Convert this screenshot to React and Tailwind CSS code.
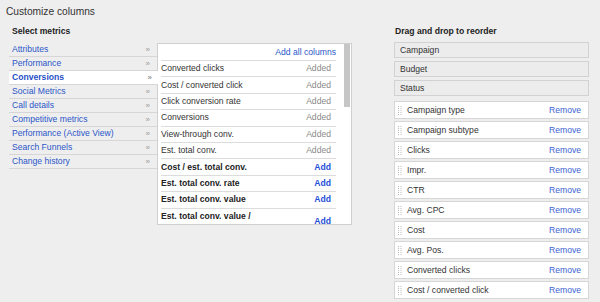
import React from "react";

const categories = [
  "Attributes",
  "Performance",
  "Conversions",
  "Social Metrics",
  "Call details",
  "Competitive metrics",
  "Performance (Active View)",
  "Search Funnels",
  "Change history",
];

const metrics = [
  { name: "Converted clicks", added: true },
  { name: "Cost / converted click", added: true },
  { name: "Click conversion rate", added: true },
  { name: "Conversions", added: true },
  { name: "View-through conv.", added: true },
  { name: "Est. total conv.", added: true },
  { name: "Cost / est. total conv.", added: false },
  { name: "Est. total conv. rate", added: false },
  { name: "Est. total conv. value", added: false },
];

const fixedCols = ["Campaign", "Budget", "Status"];
const movableCols = [
  "Campaign type",
  "Campaign subtype",
  "Clicks",
  "Impr.",
  "CTR",
  "Avg. CPC",
  "Cost",
  "Avg. Pos.",
  "Converted clicks",
  "Cost / converted click",
];

function Handle() {
  const dots = [];
  for (let r = 0; r < 5; r++) {
    for (let c = 0; c < 2; c++) {
      dots.push(<rect key={`${r}-${c}`} x={c * 2.5} y={r * 2} width="1" height="1" fill="#b8b8b8" />);
    }
  }
  return (
    <svg width="4" height="9" viewBox="0 0 4 9" className="shrink-0">
      {dots}
    </svg>
  );
}

export default function App() {
  return (
    <div className="w-[600px] h-[302px] bg-[#eeeeee] overflow-hidden font-['Liberation_Sans',Arial,sans-serif] text-[#333]">
      <div className="pl-[6px] pt-[4px] text-[10.2px] leading-[15px] text-[#333]">Customize columns</div>
      <div className="flex mt-[6px]">
        {/* Left: select metrics */}
        <div className="ml-[9px]">
          <div className="pl-[3px] h-[13px] text-[8.6px] leading-[13px] font-bold text-[#222]">Select metrics</div>
          <div className="flex mt-[5px]">
            <div className="w-[148px]">
              {categories.map((c) => {
                const sel = c === "Conversions";
                return (
                  <div
                    key={c}
                    className={
                      sel
                        ? "relative z-10 w-[149px] h-[14px] bg-white border-b border-[#d6d6d6] flex items-center pl-[3px] pr-[6px] text-[8.6px] font-bold text-[#1f4fc7]"
                        : "w-[148px] h-[14px] border-b border-[#d6d6d6] flex items-center pl-[3px] pr-[7px] text-[8.6px] text-[#2a56c9]"
                    }
                  >
                    <span className="flex-1 leading-[13px]">{c}</span>
                    <span className="text-[8px] leading-[13px] text-[#9a9a9a]">»</span>
                  </div>
                );
              })}
            </div>
            <div className="w-[195px] h-[182px] bg-white border border-[#cfcfcf] flex overflow-hidden">
              <div className="ml-[3px] w-[175px]">
                <div className="h-[17px] border-b border-[#dcdcdc] flex items-center justify-end text-[8.6px] text-[#2a56c9]">
                  Add all columns
                </div>
                {metrics.map((m) => (
                  <div
                    key={m.name}
                    className="h-[16.4px] border-b border-[#dcdcdc] flex items-center justify-between pr-[5px] text-[8.6px]"
                  >
                    <span className={m.added ? "text-[#333]" : "font-bold text-[#222]"}>{m.name}</span>
                    {m.added ? (
                      <span className="text-[#8a8a8a]">Added</span>
                    ) : (
                      <span className="font-bold text-[#1f4fd6]">Add</span>
                    )}
                  </div>
                ))}
                <div className="flex items-center justify-between pr-[5px] pt-[1px] text-[8.6px]">
                  <span className="w-[100px] font-bold text-[#222] leading-[12px]">Est. total conv. value / cost</span>
                  <span className="font-bold text-[#1f4fd6]">Add</span>
                </div>
              </div>
              <div className="ml-auto mr-[1px] mt-[0px] w-[6px] h-[63px] bg-[#c6c6c6]"></div>
            </div>
          </div>
        </div>

        {/* Right: reorder */}
        <div className="ml-[42px] w-[195px]">
          <div className="pl-[1px] h-[13px] text-[8.6px] leading-[13px] font-bold text-[#222]">Drag and drop to reorder</div>
          <div className="mt-[4px] flex flex-col gap-[3px]">
            {fixedCols.map((c) => (
              <div
                key={c}
                className="h-[16px] bg-[#ececec] border border-[#d2d2d2] flex items-center pl-[5px] text-[8.6px] text-[#333]"
              >
                {c}
              </div>
            ))}
          </div>
          <div className="mt-[5px] flex flex-col gap-[2px]">
            {movableCols.map((c) => (
              <div
                key={c}
                className="h-[18px] bg-white border border-[#d6d6d6] flex items-center pl-[3px] pr-[7px] text-[8.6px]"
              >
                <Handle />
                <span className="ml-[5px] flex-1 text-[#333]">{c}</span>
                <span className="text-[#3b63d3]">Remove</span>
              </div>
            ))}
          </div>
        </div>
      </div>
    </div>
  );
}
